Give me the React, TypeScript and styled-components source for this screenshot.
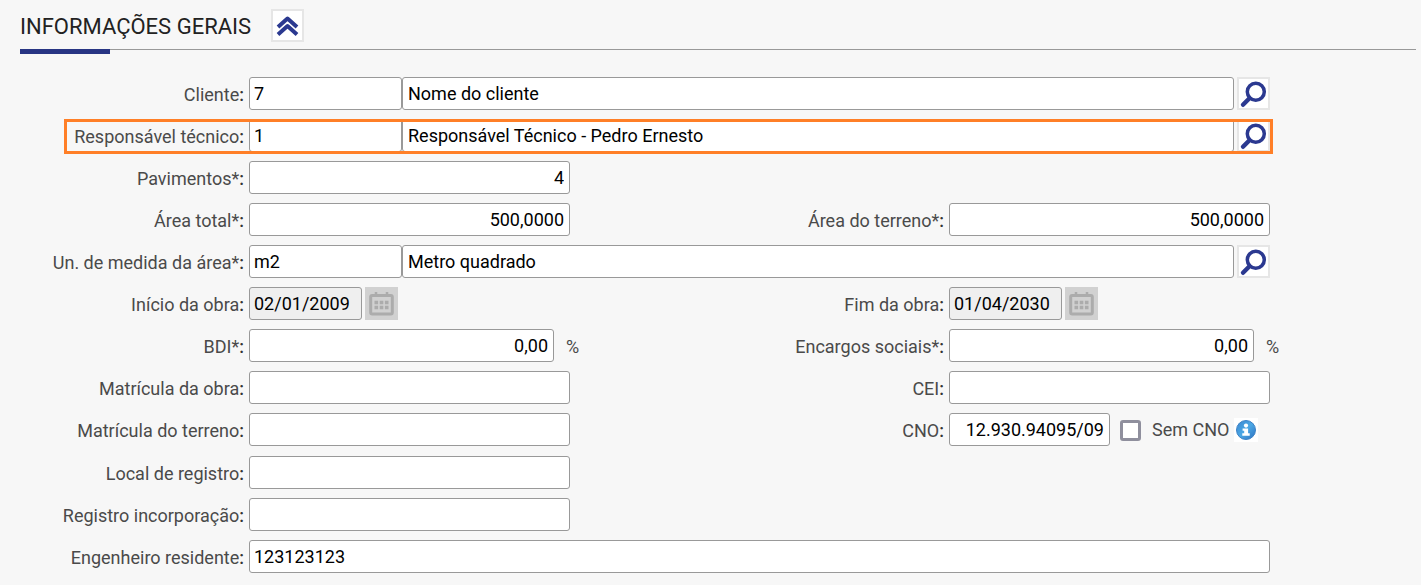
import React, { useState } from "react";
import styled, { createGlobalStyle, css } from "styled-components";

const GlobalStyle = createGlobalStyle`
  *, *::before, *::after { box-sizing: border-box; }
  html { background: #f7f7f7; }
  body {
    margin: 0;
    color: #4a4a4a;
    font-family: Roboto, "Liberation Sans", sans-serif;
    font-size: 18px;
    line-height: 24px;
  }
`;

const Page = styled.main`
  padding: 8px 5px 12px 20px;
`;

const Header = styled.header`
  position: relative;
  display: flex;
  align-items: center;
  gap: 20px;
  height: 42px;
  padding-bottom: 6px;
  border-bottom: 1px solid #999999;

  &::after {
    content: "";
    position: absolute;
    left: 0;
    bottom: -5px;
    width: 90px;
    height: 5px;
    background: #283583;
  }
`;

const Title = styled.h1`
  margin: 0;
  padding-top: 2px;
  color: #222222;
  font-size: 22px;
  font-weight: 400;
  line-height: 32px;
`;

const IconButton = styled.button`
  display: flex;
  flex: 0 0 33px;
  align-items: center;
  justify-content: center;
  width: 33px;
  height: 33px;
  padding: 0;
  border: 2px solid #e6e6e6;
  background: #ffffff;
  color: #2b3990;
  cursor: pointer;

  &:disabled {
    border-color: #d1d1d1;
    background: #d1d1d1;
    color: #acacac;
    cursor: default;
  }
`;

const Form = styled.form`
  display: flex;
  flex-direction: column;
  gap: 9px;
  max-width: 1400px;
  margin: 27px 0 0 -20px;
`;

const Row = styled.div<{ $highlight?: boolean }>`
  position: relative;
  display: grid;
  grid-template-columns: 1fr 1fr;

  ${({ $highlight }) =>
    $highlight &&
    css`
      &::after {
        content: "";
        position: absolute;
        inset: 0 127px -2px 64px;
        border: 3px solid #ff7f27;
        pointer-events: none;
      }
    `}
`;

const Field = styled.div<{ $wide?: boolean }>`
  display: flex;
  align-items: flex-start;
  min-width: 0;
  grid-column: ${({ $wide }) => ($wide ? "1 / -1" : "auto")};
  padding-right: 130px;
`;

const Label = styled.label`
  flex: 0 0 249px;
  padding: 6px 5px 0 0;
  text-align: right;
  white-space: nowrap;
`;

const Colon = styled.b`
  color: #333333;
  font-weight: 500;
`;

const Input = styled.input<{ $width?: number; $end?: boolean }>`
  flex: ${({ $width }) => ($width ? `0 0 ${$width}px` : "1 1 0")};
  min-width: 0;
  width: 0;
  height: 33px;
  padding: 0 5px 0 4px;
  border: 1px solid #999999;
  border-radius: 3px;
  background: #ffffff;
  color: #000000;
  font: inherit;
  text-align: ${({ $end }) => ($end ? "right" : "left")};

  &:disabled {
    background: #efefef;
  }

  & + ${IconButton} {
    margin-left: 3px;
  }
`;

const DescriptionInput = styled(Input)`
  padding: 0 5px;
`;

const Unit = styled.span`
  flex: 0 0 16px;
  padding-top: 6px;
  margin-left: 12px;
`;

const CheckLabel = styled.label`
  display: flex;
  align-items: center;
  gap: 11px;
  height: 34px;
  margin-left: 10px;
  white-space: nowrap;
`;

const Checkbox = styled.input`
  appearance: none;
  width: 21px;
  height: 21px;
  margin: 0;
  border: 3px solid #8f8f9d;
  border-radius: 3px;
  background: #ffffff;

  &:checked {
    background: #283583;
  }
`;

const InfoLink = styled.a`
  display: flex;
  flex: 0 0 24px;
  align-items: center;
  justify-content: center;
  width: 24px;
  height: 24px;
  margin: 5px 0 0 5px;
  background: #ffffff;
`;

const ChevronsIcon = () => (
  <svg width="23" height="22" viewBox="0 0 23 22" fill="none" stroke="currentColor" strokeWidth="4" strokeLinejoin="round" aria-hidden="true">
    <path d="M2 12 L11.5 3.6 L21 12" />
    <path d="M2 19.4 L11.5 11 L21 19.4" />
  </svg>
);

const SearchIcon = () => (
  <svg width="29" height="29" viewBox="0 0 29 29" fill="none" stroke="currentColor" aria-hidden="true">
    <circle cx="16.8" cy="12.8" r="8.5" strokeWidth="3.5" />
    <path d="M10.5 19.2 L4 25.8" strokeWidth="4.4" strokeLinecap="round" />
  </svg>
);

const CalendarIcon = () => (
  <svg width="25" height="27" viewBox="0 0 25 27" fill="none" stroke="currentColor" aria-hidden="true">
    <rect x="1.7" y="5.5" width="21.6" height="18.5" rx="1.5" strokeWidth="3" />
    <path d="M7 2v5M18 2v5" strokeWidth="2.5" />
    <path d="M5.5 12.5h14M5.5 17.5h14" strokeWidth="3.4" strokeDasharray="3.6 1.6" />
  </svg>
);

const InfoIcon = () => (
  <svg width="20" height="20" viewBox="0 0 20 20" aria-hidden="true">
    <defs>
      <linearGradient id="info-fill" x1="0" y1="0" x2="1" y2="1">
        <stop offset="0" stopColor="#3b87d0" />
        <stop offset="0.5" stopColor="#4ba7e4" />
        <stop offset="1" stopColor="#2c70c0" />
      </linearGradient>
    </defs>
    <circle cx="10" cy="10" r="9.5" fill="url(#info-fill)" stroke="#3c82c6" />
    <circle cx="10" cy="5.6" r="2.1" fill="#ffffff" />
    <path d="M6.6 8.4h5.5v4.9h1.6v2.4H6.3v-2.4h1.9v-2.5H6.6z" fill="#ffffff" />
  </svg>
);

type Caption = { id: string; label: string };

const FieldLabel = ({ id, label }: Caption) => (
  <Label htmlFor={id}>
    {label}
    <Colon>:</Colon>
  </Label>
);

const TextField = ({
  id,
  label,
  value = "",
  end,
  wide,
}: Caption & { value?: string; end?: boolean; wide?: boolean }) => (
  <Field $wide={wide}>
    <FieldLabel id={id} label={label} />
    <Input id={id} type="text" defaultValue={value} $end={end} />
  </Field>
);

const RateRoot = styled(Field)`
  padding-right: 118px;
`;

const RateField = ({ id, label, value }: Caption & { value: string }) => (
  <RateRoot>
    <FieldLabel id={id} label={label} />
    <Input id={id} type="text" defaultValue={value} $width={305} $end />
    <Unit>%</Unit>
  </RateRoot>
);

const LookupField = ({
  id,
  label,
  code,
  description,
}: Caption & { code: string; description: string }) => (
  <Field $wide>
    <FieldLabel id={id} label={label} />
    <Input id={id} type="text" defaultValue={code} $width={153} />
    <DescriptionInput type="text" defaultValue={description} aria-label={`${label} - descrição`} />
    <IconButton type="button" aria-label={`Pesquisar ${label}`}>
      <SearchIcon />
    </IconButton>
  </Field>
);

const DateField = ({ id, label, value }: Caption & { value: string }) => (
  <Field>
    <FieldLabel id={id} label={label} />
    <Input id={id} type="text" defaultValue={value} $width={113} disabled />
    <IconButton type="button" aria-label={`Calendário ${label}`} disabled>
      <CalendarIcon />
    </IconButton>
  </Field>
);

const App = () => {
  const [open, setOpen] = useState(true);

  return (
    <>
      <GlobalStyle />
      <Page>
        <Header>
          <Title>INFORMAÇÕES GERAIS</Title>
          <IconButton
            type="button"
            aria-label="Recolher seção"
            aria-expanded={open}
            onClick={() => setOpen(!open)}
          >
            <ChevronsIcon />
          </IconButton>
        </Header>
        {open && (
          <Form>
            <Row>
              <LookupField id="cliente" label="Cliente" code="7" description="Nome do cliente" />
            </Row>
            <Row $highlight>
              <LookupField
                id="responsavel"
                label="Responsável técnico"
                code="1"
                description="Responsável Técnico - Pedro Ernesto"
              />
            </Row>
            <Row>
              <TextField id="pavimentos" label="Pavimentos*" value="4" end />
            </Row>
            <Row>
              <TextField id="area-total" label="Área total*" value="500,0000" end />
              <TextField id="area-terreno" label="Área do terreno*" value="500,0000" end />
            </Row>
            <Row>
              <LookupField id="unidade" label="Un. de medida da área*" code="m2" description="Metro quadrado" />
            </Row>
            <Row>
              <DateField id="inicio" label="Início da obra" value="02/01/2009" />
              <DateField id="fim" label="Fim da obra" value="01/04/2030" />
            </Row>
            <Row>
              <RateField id="bdi" label="BDI*" value="0,00" />
              <RateField id="encargos" label="Encargos sociais*" value="0,00" />
            </Row>
            <Row>
              <TextField id="matricula-obra" label="Matrícula da obra" />
              <TextField id="cei" label="CEI" />
            </Row>
            <Row>
              <TextField id="matricula-terreno" label="Matrícula do terreno" />
              <Field>
                <FieldLabel id="cno" label="CNO" />
                <Input id="cno" type="text" defaultValue="12.930.94095/09" $width={161} $end />
                <CheckLabel>
                  <Checkbox type="checkbox" />
                  Sem CNO
                </CheckLabel>
                <InfoLink href="#cno" aria-label="Informações sobre o CNO">
                  <InfoIcon />
                </InfoLink>
              </Field>
            </Row>
            <Row>
              <TextField id="local" label="Local de registro" />
            </Row>
            <Row>
              <TextField id="incorporacao" label="Registro incorporação" />
            </Row>
            <Row>
              <TextField id="engenheiro" label="Engenheiro residente" value="123123123" wide />
            </Row>
          </Form>
        )}
      </Page>
    </>
  );
};

export default App;
